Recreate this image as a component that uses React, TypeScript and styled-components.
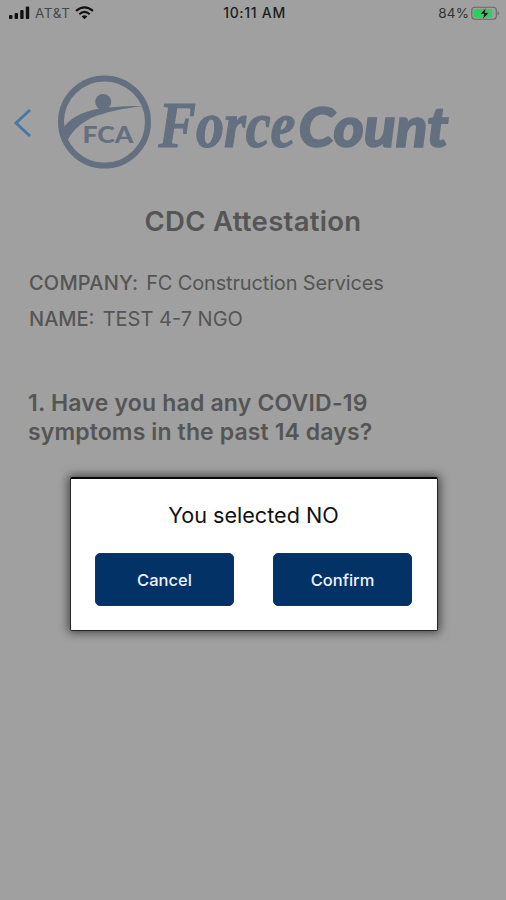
import React from "react";
import styled, { createGlobalStyle } from "styled-components";

const GlobalStyle = createGlobalStyle`
  * { box-sizing: border-box; }
  body { margin: 0; background: #a0a0a0; }
`;

const Screen = styled.div`
  position: relative;
  display: flex;
  flex-direction: column;
  width: 506px;
  height: 900px;
  overflow: hidden;
  background: #a0a0a0;
  color: #555;
  font-family: Inter, "Liberation Sans", sans-serif;
`;

const StatusBar = styled.header`
  display: grid;
  grid-template-columns: 1fr auto 1fr;
  align-items: center;
  height: 26px;
  padding: 0 6px 0 9px;
  color: #1c1c1c;
  font-size: 13px;
  line-height: 26px;
`;

const StatusGroup = styled.div<{ $end?: boolean }>`
  display: flex;
  align-items: center;
  justify-content: ${(p) => (p.$end ? "flex-end" : "flex-start")};
  gap: ${(p) => (p.$end ? 2 : 5)}px;
  color: ${(p) => (p.$end ? "#333" : "#484848")};
  font-size: 13.5px;
  letter-spacing: ${(p) => (p.$end ? 0.1 : 0.6)}px;
`;

const Clock = styled.time`
  font-size: 14px;
  font-weight: 500;
  letter-spacing: 0.7px;
`;

const Brand = styled.div`
  display: flex;
  align-items: center;
  height: 106px;
  margin-top: 44px;
  padding-left: 12px;
`;

const BackButton = styled.button`
  display: flex;
  width: 44px;
  padding: 0;
  border: 0;
  background: none;
`;

const Title = styled.h1`
  margin: 25px 0 0;
  text-align: center;
  font-size: 27.5px;
  line-height: 40px;
  font-weight: 600;
  letter-spacing: 0.3px;
`;

const Details = styled.dl`
  margin: 24px 0 0 29px;
  font-size: 20px;
  line-height: 36px;
`;

const Detail = styled.div`
  display: flex;
  gap: 8px;
`;

const Label = styled.dt<{ $tracking: number }>`
  font-weight: 500;
  letter-spacing: ${(p) => p.$tracking}px;
`;

const Value = styled.dd<{ $tracking: number }>`
  margin: 0;
  letter-spacing: ${(p) => p.$tracking}px;
`;

const Question = styled.h2`
  margin: 52px 0 0 28px;
  font-size: 23px;
  line-height: 29px;
  font-weight: 600;
`;

const QuestionLine = styled.span<{ $tracking: number }>`
  display: block;
  letter-spacing: ${(p) => p.$tracking}px;
`;

const Dialog = styled.section`
  position: absolute;
  top: 477px;
  left: 70px;
  width: 368px;
  height: 154px;
  padding: 20px 25px 0 24px;
  border: 1px solid #252525;
  border-top: 2px solid #080808;
  border-radius: 2px;
  background: #fff;
  box-shadow: 0 0 10px 2px rgba(0, 0, 0, 0.55);
`;

const Message = styled.p`
  margin: 0;
  text-align: center;
  color: #111;
  font-size: 21.6px;
  line-height: 32px;
`;

const Actions = styled.div`
  display: flex;
  justify-content: space-between;
  margin-top: 22px;
`;

const ActionButton = styled.button`
  width: 139px;
  height: 53px;
  padding: 1px 0 0;
  border: 1px solid #17306b;
  border-radius: 5px;
  background: #033366;
  color: #eef2ff;
  font: 500 16.5px/51px Inter, sans-serif;
`;

function Signal() {
  return (
    <svg width="21" height="14" viewBox="0 0 21 14" fill="#111">
      <rect x="0" y="9" width="3.4" height="4" rx="1" />
      <rect x="5.6" y="7" width="3.4" height="6" rx="1" />
      <rect x="11.2" y="4" width="3.4" height="9" rx="1" />
      <rect x="16.8" y="0.5" width="3.4" height="12.5" rx="1" />
    </svg>
  );
}

function Wifi() {
  return (
    <svg width="19" height="14" viewBox="0 0 19 14" fill="none" stroke="#111" strokeWidth="2.1">
      <path d="M1 4.9Q9.5-2.3 18 4.9" />
      <path d="M4.3 8.2Q9.5 3.6 14.7 8.2" />
      <path d="M6.7 10.4Q9.5 8 12.3 10.4L9.5 13.2Z" fill="#111" stroke="none" />
    </svg>
  );
}

function Battery() {
  return (
    <svg width="29" height="15" viewBox="0 0 29 15">
      <rect x="0.8" y="1.3" width="24.5" height="12" rx="3" fill="none" stroke="#666" strokeWidth="1.1" />
      <rect x="2.5" y="3" width="18.5" height="8.6" rx="1.2" fill="#27d35a" />
      <path d="M26.5 5v4.7Q28.3 9 28.3 7.3T26.5 5Z" fill="#777" />
      <path d="M15 1.8L9 8h4l-1.5 5.5L18 6.7h-4Z" fill="#111" stroke="#a0a0a0" strokeWidth=".6" />
    </svg>
  );
}

function Logo() {
  return (
    <svg width="400" height="106" viewBox="56 70 400 106" fill="#64707f">
      <circle cx="104.5" cy="122" r="43.5" fill="none" stroke="#64707f" strokeWidth="6" />
      <circle cx="103.2" cy="102" r="8" />
      <path d="M61 131C69 118 82 112 97 109C114 106.5 129 106 144 106C125 108 105 112 91 118C78 125 71 132 66 144Z" />
      <text x="82.5" y="143" textLength="51" lengthAdjust="spacingAndGlyphs" fontFamily="Lato, sans-serif" fontWeight="900" fontSize="22.5">FCA</text>
      <text x="158.5" y="146.5" textLength="137" lengthAdjust="spacingAndGlyphs" fontFamily="Liberation Serif, serif" fontWeight="700" fontStyle="italic" fontSize="65" stroke="#64707f" strokeWidth="1.2">Force</text>
      <text x="298.5" y="146.5" textLength="150" lengthAdjust="spacingAndGlyphs" fontFamily="Lato, sans-serif" fontWeight="900" fontStyle="italic" fontSize="56" stroke="#64707f" strokeWidth="1.6">Count</text>
    </svg>
  );
}

export default function App() {
  return (
    <Screen>
      <GlobalStyle />
      <StatusBar>
        <StatusGroup><Signal /><span>AT&amp;T</span><Wifi /></StatusGroup>
        <Clock>10:11 AM</Clock>
        <StatusGroup $end><span>84%</span><Battery /></StatusGroup>
      </StatusBar>
      <Brand>
        <BackButton aria-label="Back">
          <svg width="22" height="32" viewBox="0 0 22 32" fill="none" stroke="#4779a7" strokeWidth="3">
            <path d="M18 3L4 16L18 29" />
          </svg>
        </BackButton>
        <Logo />
      </Brand>
      <Title>CDC Attestation</Title>
      <Details>
        <Detail><Label $tracking={0.2}>COMPANY:</Label><Value $tracking={-0.16}>FC Construction Services</Value></Detail>
        <Detail><Label $tracking={0}>NAME:</Label><Value $tracking={0}>TEST 4-7 NGO</Value></Detail>
      </Details>
      <Question>
        <QuestionLine $tracking={0.2}>1. Have you had any COVID-19</QuestionLine>
        <QuestionLine $tracking={0.12}>symptoms in the past 14 days?</QuestionLine>
      </Question>
      <Dialog role="dialog">
        <Message>You selected NO</Message>
        <Actions>
          <ActionButton>Cancel</ActionButton>
          <ActionButton>Confirm</ActionButton>
        </Actions>
      </Dialog>
    </Screen>
  );
}
